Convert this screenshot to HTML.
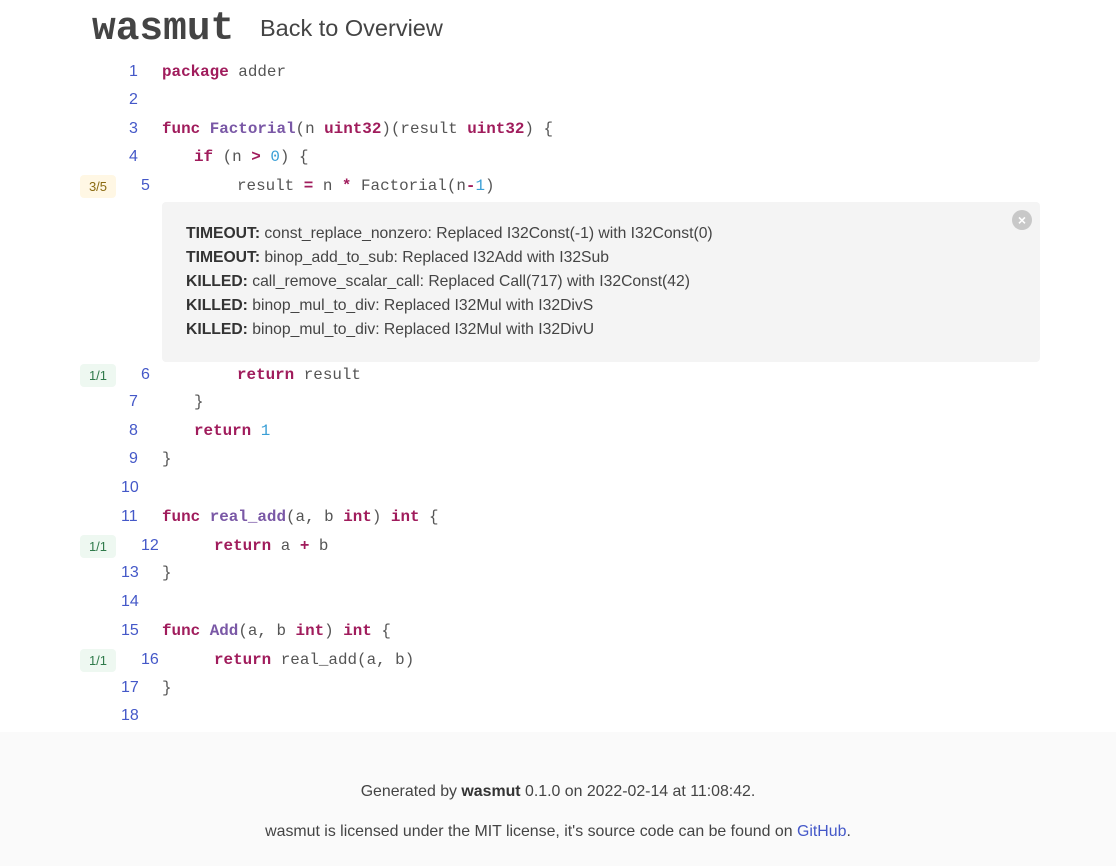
<!DOCTYPE html>
<html><head><meta charset="utf-8"><style>
body{margin:0;width:1116px;height:866px;background:#fff;position:relative;overflow:hidden;font-family:"Liberation Sans",sans-serif;color:#444}
.logo{position:absolute;left:92px;top:5px;font-family:"Liberation Mono",monospace;font-weight:bold;font-size:39.5px;color:#444;line-height:48px}
.back{position:absolute;left:260px;top:12px;font-size:23.5px;color:#444;line-height:32px}
.ln{position:absolute;height:28px;line-height:28px;font-size:16px;color:#4458c8}
.code{position:absolute;height:28px;line-height:28px;font-family:"Liberation Mono",monospace;font-size:15.9px;color:#555;white-space:pre}
.k{color:#a01c5c;font-weight:bold}
.f{color:#7a58a6;font-weight:bold}
.n{color:#3a9fd6}
.badge{position:absolute;left:80px;width:36px;height:23px;border-radius:4px;font-size:13px;line-height:23px;text-align:center}
.y{background:#fff7e4;color:#8a6a10}
.g{background:#eef8f1;color:#2f7a4a}
.box{position:absolute;left:162px;top:202px;width:878px;height:160px;background:#f4f4f4;border-radius:4px}
.msg{position:absolute;left:24px;top:20px;font-size:15.7px;line-height:24px;color:#444}
.msg b{color:#333}
.x{position:absolute;right:8px;top:8px;width:20px;height:20px;border-radius:50%;background:#c8c8c8;color:#fff;font-size:14px;line-height:20px;text-align:center;font-weight:bold}
.foot{position:absolute;left:0;top:732px;width:1116px;height:134px;background:#fafafa;text-align:center;font-size:15.9px;color:#444}
.foot a{color:#4458c8;text-decoration:none}
</style></head><body>
<div class="logo">wasmut</div>
<div class="back">Back to Overview</div>

<div class="ln" style="left:129px;top:58px">1</div><div class="code" style="left:162px;top:58px"><span class="k">package</span> adder</div>
<div class="ln" style="left:129px;top:86px">2</div>
<div class="ln" style="left:129px;top:115px">3</div><div class="code" style="left:162px;top:115px"><span class="k">func</span> <span class="f">Factorial</span>(n <span class="k">uint32</span>)(result <span class="k">uint32</span>) {</div>
<div class="ln" style="left:129px;top:143px">4</div><div class="code" style="left:194px;top:143px"><span class="k">if</span> (n <span class="k">&gt;</span> <span class="n">0</span>) {</div>
<div class="badge y" style="top:175px">3/5</div>
<div class="ln" style="left:141px;top:172px">5</div><div class="code" style="left:237px;top:172px">result <span class="k">=</span> n <span class="k">*</span> Factorial(n<span class="k">-</span><span class="n">1</span>)</div>

<div class="box"><div class="x">×</div><div class="msg">
<b>TIMEOUT:</b> const_replace_nonzero: Replaced I32Const(-1) with I32Const(0)<br>
<b>TIMEOUT:</b> binop_add_to_sub: Replaced I32Add with I32Sub<br>
<b>KILLED:</b> call_remove_scalar_call: Replaced Call(717) with I32Const(42)<br>
<b>KILLED:</b> binop_mul_to_div: Replaced I32Mul with I32DivS<br>
<b>KILLED:</b> binop_mul_to_div: Replaced I32Mul with I32DivU
</div></div>

<div class="badge g" style="top:364px">1/1</div>
<div class="ln" style="left:141px;top:361px">6</div><div class="code" style="left:237px;top:361px"><span class="k">return</span> result</div>
<div class="ln" style="left:129px;top:388px">7</div><div class="code" style="left:194px;top:388px">}</div>
<div class="ln" style="left:129px;top:417px">8</div><div class="code" style="left:194px;top:417px"><span class="k">return</span> <span class="n">1</span></div>
<div class="ln" style="left:129px;top:445px">9</div><div class="code" style="left:162px;top:445px">}</div>
<div class="ln" style="left:121px;top:474px">10</div>
<div class="ln" style="left:121px;top:503px">11</div><div class="code" style="left:162px;top:503px"><span class="k">func</span> <span class="f">real_add</span>(a, b <span class="k">int</span>) <span class="k">int</span> {</div>
<div class="badge g" style="top:535px">1/1</div>
<div class="ln" style="left:141px;top:532px">12</div><div class="code" style="left:214px;top:532px"><span class="k">return</span> a <span class="k">+</span> b</div>
<div class="ln" style="left:121px;top:559px">13</div><div class="code" style="left:162px;top:559px">}</div>
<div class="ln" style="left:121px;top:588px">14</div>
<div class="ln" style="left:121px;top:617px">15</div><div class="code" style="left:162px;top:617px"><span class="k">func</span> <span class="f">Add</span>(a, b <span class="k">int</span>) <span class="k">int</span> {</div>
<div class="badge g" style="top:649px">1/1</div>
<div class="ln" style="left:141px;top:646px">16</div><div class="code" style="left:214px;top:646px"><span class="k">return</span> real_add(a, b)</div>
<div class="ln" style="left:121px;top:674px">17</div><div class="code" style="left:162px;top:674px">}</div>
<div class="ln" style="left:121px;top:702px">18</div>

<div class="foot">
<div style="position:absolute;left:0;width:100%;top:50px;line-height:20px">Generated by <b style="color:#333">wasmut</b> 0.1.0 on 2022-02-14 at 11:08:42.</div>
<div style="position:absolute;left:0;width:100%;top:90px;line-height:20px">wasmut is licensed under the MIT license, it's source code can be found on <a>GitHub</a>.</div>
</div>
</body></html>
